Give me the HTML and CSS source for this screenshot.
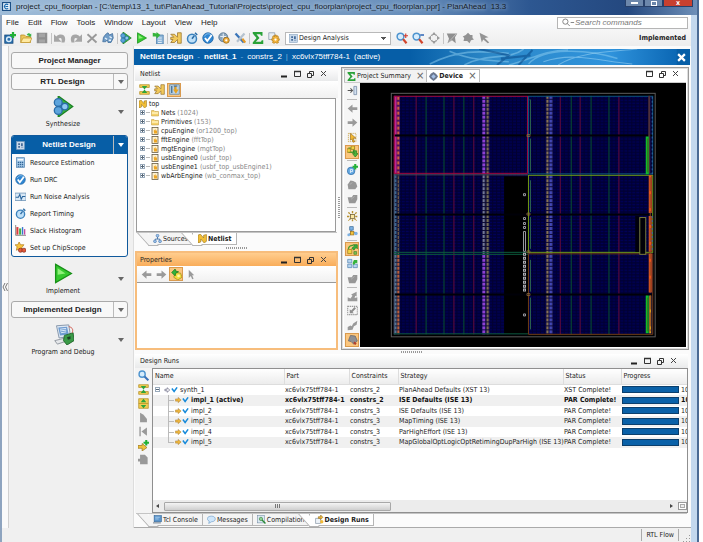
FILE: index.html
```html
<!DOCTYPE html>
<html lang="en">
<head>
<meta charset="utf-8">
<title>project_cpu_floorplan - PlanAhead 13.3</title>
<link rel="stylesheet" href="styles.css">
</head>
<body>
<svg class="sprite" aria-hidden="true">
  <symbol id="logo" viewBox="0 0 16 16"><rect x="1" y="1" width="14" height="14" fill="#eaf3fb" stroke="#1c4f85" stroke-width="2"/><path d="M11 5a4 4 0 1 0 0 6M6 8h5" fill="none" stroke="#1769b0" stroke-width="2"/></symbol>
  <symbol id="newproj" viewBox="0 0 16 16"><rect x="1" y="4" width="11" height="11" fill="#2a6fad" stroke="#174a7d"/><circle cx="6.500" cy="9.500" r="3" fill="none" stroke="#d8ecfb" stroke-width="2"/><path d="M12 0v8M8 4h8" stroke="#22b035" stroke-width="3"/></symbol>
  <symbol id="open" viewBox="0 0 16 16"><path d="M1 14V4h5l2 2h6v8z" fill="#edc75a" stroke="#b58a20"/><path d="M1 14l3-6h12l-3 6z" fill="#ffe9a0" stroke="#c39a33"/><path d="M9 4c1-3 4-3 5-1l1-1v4h-4l1-1" fill="#3cb54a"/></symbol>
  <symbol id="save" viewBox="0 0 16 16"><path d="M1 1h14v14H1z" fill="#8f8f8f"/><path d="M4 2h8v5H4zM4 10h8v4H4z" fill="#a5a5a5"/></symbol>
  <symbol id="undo" viewBox="0 0 16 16"><path d="M0 3v10h10L6 9c3-2 5-1 4 5h4C18 3 8 1 3 6z" fill="#a6a6a6"/></symbol>
  <symbol id="redo" viewBox="0 0 16 16"><path d="M16 3v10H6l4-4C7 7 5 8 6 14H2C-2 3 8 1 13 6z" fill="#a6a6a6"/></symbol>
  <symbol id="cross" viewBox="0 0 16 16"><path d="M2 3l12 11M14 3L2 14" stroke="#999" stroke-width="2.500"/></symbol>
  <symbol id="find" viewBox="0 0 16 16"><path d="M5 3l3-2 2 3 4-2 1 6-3 6H8l-1-4-2 3H1l1-6z" fill="#6f9cc7" stroke="#3d6b99"/><path d="M4 8l3 2M10 6l3 2M9 11h3" stroke="#e6f2fc" stroke-width="2"/></symbol>
  <symbol id="synth" viewBox="0 0 16 16"><path d="M4 0l11 8-11 8z" fill="#38b83c" stroke="#1c8224"/><circle cx="4" cy="5" r="3" fill="#5da4dc" stroke="#2a6da8"/><circle cx="4" cy="11" r="3" fill="#5da4dc" stroke="#2a6da8"/><circle cx="9" cy="8" r="2.500" fill="#8fc8f2" stroke="#2a6da8"/></symbol>
  <symbol id="play" viewBox="0 0 16 16"><path d="M2 1l12 7-12 7z" fill="#35c92f" stroke="#189018"/><path d="M3.500 4l6 4-6 1z" fill="#8ff07a"/></symbol>
  <symbol id="bits" viewBox="0 0 16 16"><path d="M6 4h9v12H6z" fill="#8fb7da" stroke="#4b7dab"/><path d="M8 8h5M8 11h5M8 14h5" stroke="#fff"/><path d="M1 1v5h5v3l5-5-5-4v2z" fill="#35b53a"/></symbol>
  <symbol id="route" viewBox="0 0 16 16"><path d="M1 3h5l4 4V1h5v14h-5V10L6 14H1l3-4H1V7h4z" fill="#f1c95c" stroke="#98722a"/></symbol>
  <symbol id="clock" viewBox="0 0 16 16"><circle cx="8" cy="9" r="6" fill="#bfe0f8" stroke="#3b82bd" stroke-width="2"/><path d="M12 1l3 3M8 9l3-4" stroke="#2c6ca5" stroke-width="2"/></symbol>
  <symbol id="drc" viewBox="0 0 16 16"><circle cx="8" cy="8" r="7" fill="#2f86d2" stroke="#1d62a0"/><path d="M3 6c3-5 7-4 9-2" stroke="#9fd0f5" fill="none"/><path d="M4 8l3 4 6-8" fill="none" stroke="#fff" stroke-width="2.500"/></symbol>
  <symbol id="power" viewBox="0 0 16 16"><circle cx="7" cy="7" r="6" fill="#8aa4bb" stroke="#53718c"/><path d="M3 6h8M7 2v9" stroke="#e6eef5" stroke-width="1.500"/><circle cx="11" cy="11" r="4" fill="#f2ae3a" stroke="#8e641a"/><circle cx="11" cy="11" r="1.500" fill="#fff"/></symbol>
  <symbol id="tools" viewBox="0 0 16 16"><path d="M2 2l11 12" stroke="#3b75b8" stroke-width="3"/><path d="M14 2L4 13" stroke="#b6c3cf" stroke-width="3"/><path d="M11 9l4 5" stroke="#e59a26" stroke-width="3"/></symbol>
  <symbol id="sigma" viewBox="0 0 16 16"><path d="M1 0h13v5h-2l-1-2H6l4 5-5 5h7l1-2h2v5H1v-2l5-6-5-6z" fill="#2aa238"/></symbol>
  <symbol id="gear" viewBox="0 0 16 16"><path d="M1 1h8v9H1z" fill="#e7edf3" stroke="#8b9bac"/><path d="M9 4h2v2l2-1 1 2-1 2h2v2l-2 1 1 2-2 1-2-1-2 1-2-1 1-2-2-1V9h2L6 7l1-2 2 1z" fill="#f4b63d" stroke="#b27916"/><circle cx="10" cy="10" r="1.500" fill="#fff"/></symbol>
  <symbol id="zin" viewBox="0 0 16 16"><circle cx="6" cy="6" r="4.500" fill="#d6ecfc" stroke="#4e94cf" stroke-width="2"/><path d="M9.500 9.500L14 15" stroke="#d2452c" stroke-width="3"/><path d="M13 2v6M10 5h6" stroke="#d43b2c" stroke-width="1.500"/></symbol>
  <symbol id="zout" viewBox="0 0 16 16"><circle cx="6" cy="6" r="4.500" fill="#d6ecfc" stroke="#4e94cf" stroke-width="2"/><path d="M9.500 9.500L14 15" stroke="#d2452c" stroke-width="3"/><path d="M11 4h5" stroke="#2c63b5" stroke-width="2"/></symbol>
  <symbol id="mag" viewBox="0 0 16 16"><circle cx="6" cy="6" r="4.500" fill="#d6ecfc" stroke="#4e94cf" stroke-width="2"/><path d="M9.500 9.500L15 15" stroke="#3c72b8" stroke-width="3"/></symbol>
  <symbol id="fit" viewBox="0 0 16 16"><path d="M8 0l3 4H5zM8 16l3-4H5zM0 8l4-3v6zM16 8l-4-3v6z" fill="#9a9a9a"/><path d="M4 4l2 1M12 4l-2 1M4 12l2-1M12 12l-2-1" stroke="#999" stroke-width="1.500"/></symbol>
  <symbol id="gselect" viewBox="0 0 16 16"><path d="M1 2h14l-3 5 1 8-5-4-6 4 2-6z" fill="#8f8f8f"/><path d="M3 14L14 2" stroke="#c9c9c9"/></symbol>
  <symbol id="gmark" viewBox="0 0 16 16"><path d="M8 1l3 3h3v4l2 2-4 1-2 4-3-3H2l1-4-2-2 4-2z" fill="#929292"/></symbol>
  <symbol id="garrow" viewBox="0 0 16 16"><path d="M2 1l12 6-5 1 6 6-2 1-6-5-2 4z" fill="#949494"/></symbol>
  <symbol id="chip" viewBox="0 0 16 16"><rect x="1" y="1" width="14" height="14" fill="#c9d9ea" stroke="#7f9dbb"/><path d="M4 4h3v3H4zM9 4h3v5H9zM4 9h3v3H4z" fill="#3f6796"/><path d="M9 11h4" stroke="#3f6796"/></symbol>
  <symbol id="calc" viewBox="0 0 16 16"><rect x="2" y="1" width="12" height="14" fill="#a9cdeb" stroke="#4d7ead"/><path d="M4 3h8v2H4z" fill="#fff"/><path d="M5 7v7M8 7v7M11 7v7" stroke="#2f6496" stroke-width="2" stroke-dasharray="2 1"/></symbol>
  <symbol id="noise" viewBox="0 0 16 16"><rect x="0" y="3" width="16" height="11" fill="#d8e8f6" stroke="#5d87ad"/><path d="M1 9h4l2-4 2 7 2-4h4" fill="none" stroke="#2a659c" stroke-width="1.500"/></symbol>
  <symbol id="hist" viewBox="0 0 16 16"><path d="M1 0v15h15" fill="none" stroke="#555"/><path d="M2 3h3v11H2z" fill="#d83d3d"/><path d="M6 5h3v9H6z" fill="#3cae48"/><path d="M10 3h2v11h-2z" fill="#3577cf"/><path d="M13 6h2v8h-2z" fill="#c24b9f"/></symbol>
  <symbol id="scope" viewBox="0 0 16 16"><path d="M6 0l2 4 5 0-3 4 1 4-5-2-4 2 1-5-3-3h4z" fill="#fac53e" stroke="#ad7a17"/><circle cx="8" cy="12" r="3" fill="#e35a3a" stroke="#84291a"/><circle cx="13" cy="12" r="3" fill="#e35a3a" stroke="#84291a"/></symbol>
  <symbol id="board" viewBox="0 0 24 24"><path d="M4 2l14-1 2 13-13 2z" fill="#dfe9f4" stroke="#7d8ea3"/><path d="M6 4l10-1 2 9-10 1z" fill="#6f9cd0"/><path d="M8 6l7-1M8 8l7-1M9 10l6-1" stroke="#e8f2fd"/><path d="M2 19l12-3 3 3-12 4z" fill="#e5e7ea" stroke="#8b929c"/><path d="M13 13l10-3 1 9-8 5-4-5z" fill="#3a9a47" stroke="#1e6428"/><path d="M16 15l4-1v3l-3 1z" fill="#1f4127"/><path d="M18 3c5 1 5 4 4 7" fill="none" stroke="#cf5447"/></symbol>
  <symbol id="compress" viewBox="0 0 16 16"><path d="M1 1h14v4H1zM1 11h14v4H1z" fill="#f2cd51" stroke="#b18a22"/><path d="M8 8L4 3h8zM8 8l-4 5h8z" fill="#2ea43b"/></symbol>
  <symbol id="expand" viewBox="0 0 16 16"><path d="M1 1h14v14H1z" fill="#f2cd51" stroke="#b18a22"/><path d="M1 8h14" stroke="#b18a22"/><path d="M8 1l4 5H4zM8 15l4-5H4z" fill="#2ea43b"/></symbol>
  <symbol id="autofit" viewBox="0 0 16 16"><path d="M1 1h14v14H1z" fill="#bcd2e4" stroke="#5b83a5"/><path d="M4 3v10M7 3h5M9 3v5" stroke="#456f93" stroke-width="2"/><path d="M8 4h3v4h3l-4 6-4-6h2z" fill="#e6a21e"/></symbol>
  <symbol id="netn" viewBox="0 0 16 16"><path d="M0 2l4-2 6 7V2l5-1v12l-4 3-6-7v5l-5 2z" fill="#f1be37" stroke="#8f6a14"/></symbol>
  <symbol id="folder" viewBox="0 0 16 16"><path d="M1 14V3h5l2 2h7v9z" fill="#f5d26d" stroke="#bd9433"/><path d="M2 8h12" stroke="#fff2bd" stroke-width="3"/></symbol>
  <symbol id="inst" viewBox="0 0 16 16"><rect x="2" y="1" width="12" height="14" fill="#fdf1cf" stroke="#5e5138" stroke-width="1.500"/><path d="M5 8l4-4v3h3v6H6V9z" fill="#eda626"/></symbol>
  <symbol id="hier" viewBox="0 0 16 16"><path d="M8 5v4M4 11V9h8v2" fill="none" stroke="#3d6da5" stroke-width="1.500"/><circle cx="8" cy="3" r="2.500" fill="#9cc3ec" stroke="#3d6da5"/><circle cx="3.500" cy="13" r="2.500" fill="#9cc3ec" stroke="#3d6da5"/><circle cx="12.500" cy="13" r="2.500" fill="#9cc3ec" stroke="#3d6da5"/></symbol>
  <symbol id="left" viewBox="0 0 16 16"><path d="M1 8l7-6v4h7v4H8v4z" fill="#9a9a9a"/></symbol>
  <symbol id="right" viewBox="0 0 16 16"><path d="M15 8L8 2v4H1v4h7v4z" fill="#9a9a9a"/></symbol>
  <symbol id="props" viewBox="0 0 16 16"><path d="M6 5l8 1 2 6-6 4-6-4z" fill="#f1dc3c" stroke="#9b8714"/><path d="M1 5l5-5 1 3 4 1-4 2-1 4z" fill="#32b33a" stroke="#15761d"/><circle cx="11" cy="10" r="2" fill="#fff7a8"/></symbol>
  <symbol id="cursor" viewBox="0 0 16 16"><path d="M4 1l8 8H9l2 5-2 1-2-5-3 3z" fill="#9a9a9a"/></symbol>
  <symbol id="ycursor" viewBox="0 0 16 16"><path d="M2 2h11v12H2z" fill="none" stroke="#c59832" stroke-dasharray="2 1"/><path d="M5 2l8 7H9l2 5-2 1-2-5-2 2z" fill="#f3b730" stroke="#9b6e16"/></symbol>
  <symbol id="dock" viewBox="0 0 16 16"><path d="M1 8h7M5 5l3 3-3 3" fill="none" stroke="#555" stroke-width="1.500"/><path d="M10 2h4v12h-4z" fill="#d2e0f0" stroke="#6a7f9c"/></symbol>
  <symbol id="loop" viewBox="0 0 16 16"><path d="M3 3h7v6H3z" fill="none" stroke="#4a9e2e" stroke-width="2"/><path d="M0 4h5v5H0zM6 0h5v5H6z" fill="#f3d344" stroke="#95791b"/><path d="M9 7h5v4l2 0-4 5-4-5h3z" fill="#4db63c" stroke="#287721"/></symbol>
  <symbol id="cells" viewBox="0 0 16 16"><path d="M2 8c0-4 3-6 7-6" fill="none" stroke="#4a9e2e" stroke-width="2"/><path d="M9 1h6v6l-2-2-3 4-3-3 4-3z" fill="#35b33c" stroke="#287721"/><path d="M1 8h6v6H1z" fill="#f3d344" stroke="#95791b"/><path d="M10 11h4v4h-4z" fill="#79c453" stroke="#4a7d2e"/></symbol>
  <symbol id="addp" viewBox="0 0 16 16"><circle cx="6" cy="10" r="5.500" fill="#65a9e2" stroke="#2b69a5"/><path d="M5 13V8h3v3H5" stroke="#fff" fill="none"/><path d="M12 0v8M8 4h8" stroke="#22b035" stroke-width="3"/></symbol>
  <symbol id="blob" viewBox="0 0 16 16"><path d="M1 8l4-6 4 1 4 2 2 6-3 4H2z" fill="#979797"/><path d="M4 8l4-3" stroke="#b8b8b8"/></symbol>
  <symbol id="blob2" viewBox="0 0 16 16"><path d="M1 6h6l2-3h6v6l-3 6H3z" fill="#979797"/><path d="M6 9l5-4" stroke="#bbb"/></symbol>
  <symbol id="burst" viewBox="0 0 16 16"><path d="M8 0v16M0 8h16M2 2l12 12M14 2L2 14" stroke="#b8912f" stroke-width="2" stroke-dasharray="3 1"/><rect x="5" y="5" width="6" height="6" fill="#fbe7a0" stroke="#6b5c3a"/></symbol>
  <symbol id="conn" viewBox="0 0 16 16"><path d="M6 4v6l-4 3M7 10h7" stroke="#5a80a7" fill="none" stroke-width="1.500"/><rect x="4" y="1" width="5" height="5" fill="#7db2e4" stroke="#316392"/><rect x="5" y="8" width="5" height="5" fill="#f3c23c" stroke="#94701a"/><circle cx="2.500" cy="13" r="2" fill="#7db2e4"/><circle cx="13" cy="11" r="2.500" fill="#7db2e4"/></symbol>
  <symbol id="grid" viewBox="0 0 16 16"><path d="M1 2h6v5H1zM1 9h6v5H1zM9 9h6v5H9z" fill="#b8d5ef" stroke="#4d80b0"/><path d="M8 8l2-5h5v5l-2-1-3 3z" fill="#35b33c"/></symbol>
  <symbol id="gout" viewBox="0 0 16 16"><path d="M1 15V9l4 2 3-4-2-2 8-4 0 7-2-1-1 3 4-1v6z" fill="#999"/></symbol>
  <symbol id="gbox" viewBox="0 0 16 16"><path d="M1 2h14v12H1z" fill="none" stroke="#999" stroke-width="1.500" stroke-dasharray="2 1"/><path d="M4 12V6l2 2 5-5 2 2-5 5 2 2z" fill="#8e8e8e"/></symbol>
  <symbol id="gdiag" viewBox="0 0 16 16"><path d="M1 15v-5l4-2 2 1 2-4 6-4-1 6-4 2-2 5z" fill="#999"/></symbol>
  <symbol id="shade" viewBox="0 0 16 16"><path d="M2 10L5 2l7 1 3 7-5 5-4-4z" fill="#8e8f93" stroke="#606168"/><path d="M10 12l3 3" stroke="#b53f2a" stroke-width="3"/></symbol>
  <symbol id="diamond" viewBox="0 0 16 16"><path d="M8 0l3 2 3 3 2 3-3 4-5 4-5-4-3-4 3-5z" fill="#6a7890"/><path d="M8 4l4 4-4 4-4-4z" fill="#a5c0e6"/></symbol>
  <symbol id="gstep" viewBox="0 0 16 16"><path d="M2 1h2v14H2zM13 2v12L5 8z" fill="#999"/></symbol>
  <symbol id="gpage" viewBox="0 0 16 16"><path d="M3 1l5 3 5 6v5H3z" fill="#999"/></symbol>
  <symbol id="addrun" viewBox="0 0 16 16"><path d="M0 8h6V5l7 6-7 5v-4H0z" fill="#f0c33d" stroke="#957019"/><path d="M12 0v8M8 4h8" stroke="#22b035" stroke-width="3"/></symbol>
  <symbol id="gdoc" viewBox="0 0 16 16"><path d="M3 1h7l4 4v10H3v-4H0V7h3z" fill="#999"/></symbol>
  <symbol id="runw" viewBox="0 0 16 16"><path d="M1 6h6V2l7 6-7 6v-4H1z" fill="#fff" stroke="#446" stroke-width="1.500"/></symbol>
  <symbol id="runy" viewBox="0 0 16 16"><path d="M0 5h7V1l8 7-8 7v-4H0z" fill="#edb640" stroke="#94661b"/></symbol>
  <symbol id="tick" viewBox="0 0 16 16"><path d="M1 4l6 8 8-11" fill="none" stroke="#168ada" stroke-width="4"/></symbol>
  <symbol id="console" viewBox="0 0 16 16"><rect x="2" y="1" width="13" height="11" fill="#5a95cc" stroke="#2c5f90"/><path d="M4 4h8M4 7h6" stroke="#d9edff"/><path d="M0 14h14" stroke="#7f8b97" stroke-width="2"/></symbol>
  <symbol id="bubble" viewBox="0 0 16 16"><path d="M8 2c9 0 9 10 0 10l-5 3 1-4C-2 8 0 2 8 2z" fill="#cfe6fa" stroke="#5d93c4"/></symbol>
  <symbol id="compile" viewBox="0 0 16 16"><rect x="1" y="1" width="12" height="13" fill="#dce8f2" stroke="#708aa3"/><circle cx="7" cy="7" r="3" fill="#8ed093" stroke="#2b7a33"/><path d="M9 9l6 6" stroke="#2a8a35" stroke-width="2.500"/></symbol>
  <symbol id="runs" viewBox="0 0 16 16"><path d="M1 6h9v9H1z" fill="#eef3f8" stroke="#6c7f93"/><path d="M6 3h4V0l4 4-4 4V6H6z" fill="#f1ba37" stroke="#8d681b"/><circle cx="12" cy="12" r="3" fill="#f1ba37"/></symbol>
  <symbol id="winctl" viewBox="0 0 50 10"><path d="M1 7.500h6" stroke="#222" stroke-width="2"/><path d="M14.500 2.500h6v5h-6z" fill="none" stroke="#333"/><path d="M14 2.500h7" stroke="#333" stroke-width="1.500"/><path d="M27.500 4.500h4v4h-4zM29.500 4V2.500h4v4H32" fill="none" stroke="#333"/><path d="M41 2l5 5M46 2l-5 5" stroke="#444"/></symbol>
</svg>

<div class="desktop">
<div class="window">
  <header class="titlebar">
    <svg class="ic"><use href="#logo"/></svg>
    <h1>project_cpu_floorplan - [C:\temp\13_1_tut\PlanAhead_Tutorial\Projects\project_cpu_floorplan\project_cpu_floorplan.ppr] - PlanAhead&nbsp; 13.3</h1>
    <div class="caption">
      <button type="button" class="cap" aria-label="Minimize"><i class="c-min"></i></button>
      <button type="button" class="cap" aria-label="Restore"><i class="c-max"></i></button>
      <button type="button" class="cap cap-close" aria-label="Close">x</button>
    </div>
  </header>

  <div class="client">
    <div class="menurow">
      <nav class="menu"><a href="#">File</a><a href="#">Edit</a><a href="#">Flow</a><a href="#">Tools</a><a href="#">Window</a><a href="#">Layout</a><a href="#">View</a><a href="#">Help</a></nav>
      <label class="search">
        <svg viewBox="0 0 16 10"><circle cx="5" cy="4" r="3" fill="none" stroke="#777"/><path d="M7 6l3 3M11 5h4" stroke="#777"/></svg>
        <input type="search" placeholder="Search commands" aria-label="Search commands">
      </label>
    </div>

    <div class="toolbar">
      <button type="button" aria-label="New project"><svg><use href="#newproj"/></svg></button>
      <button type="button" aria-label="Open"><svg><use href="#open"/></svg></button>
      <button type="button" aria-label="Save"><svg><use href="#save"/></svg></button>
      <span class="vsep"></span>
      <button type="button" aria-label="Undo"><svg><use href="#undo"/></svg></button>
      <button type="button" aria-label="Redo"><svg><use href="#redo"/></svg></button>
      <button type="button" aria-label="Delete"><svg><use href="#cross"/></svg></button>
      <button type="button" aria-label="Find"><svg><use href="#find"/></svg></button>
      <span class="vsep"></span>
      <button type="button" aria-label="Synthesize"><svg><use href="#synth"/></svg></button>
      <button type="button" aria-label="Implement"><svg><use href="#play"/></svg></button>
      <button type="button" aria-label="Generate bitstream"><svg><use href="#bits"/></svg></button>
      <span class="vsep"></span>
      <button type="button" aria-label="Schematic"><svg><use href="#route"/></svg></button>
      <button type="button" aria-label="Timing"><svg><use href="#clock"/></svg></button>
      <button type="button" aria-label="DRC"><svg><use href="#drc"/></svg></button>
      <button type="button" aria-label="Noise"><svg><use href="#power"/></svg></button>
      <button type="button" aria-label="Tools"><svg><use href="#tools"/></svg></button>
      <span class="vsep"></span>
      <button type="button" aria-label="Project summary"><svg><use href="#sigma"/></svg></button>
      <button type="button" aria-label="Settings"><svg><use href="#gear"/></svg></button>
      <div class="layoutpick">
        <svg class="ic"><use href="#chip"/></svg>
        <select aria-label="Layout"><option>Design Analysis</option></select>
      </div>
      <button type="button" aria-label="Zoom in"><svg><use href="#zin"/></svg></button>
      <button type="button" aria-label="Zoom out"><svg><use href="#zout"/></svg></button>
      <button type="button" aria-label="Zoom fit"><svg><use href="#fit"/></svg></button>
      <span class="vsep"></span>
      <button type="button" aria-label="Select area"><svg><use href="#gselect"/></svg></button>
      <button type="button" aria-label="Mark"><svg><use href="#gmark"/></svg></button>
      <button type="button" aria-label="Unselect"><svg><use href="#garrow"/></svg></button>
      <strong class="state">Implemented</strong>
    </div>

    <div class="body">
      <button type="button" class="collapse" aria-label="Collapse navigator"><svg viewBox="0 0 6 8"><path d="M3 0L1 4l2 4M5.500 0l-2 4 2 4" fill="none" stroke="#777"/></svg></button>
      <aside class="flow">
        <button type="button" class="stage">Project Manager</button>
        <div class="stage split"><button type="button">RTL Design</button><button type="button" class="drop" aria-label="RTL Design menu"></button></div>
        <div class="step">
          <button type="button" class="go"><svg><use href="#synth"/></svg>Synthesize</button>
          <button type="button" class="drop" aria-label="Synthesize menu"></button>
        </div>
        <section class="current">
          <div class="stage split active"><svg class="ic"><use href="#chip"/></svg><button type="button">Netlist Design</button><button type="button" class="drop" aria-label="Netlist Design menu"></button></div>
          <ul>
            <li><svg class="ic"><use href="#calc"/></svg><a href="#">Resource Estimation</a></li>
            <li><svg class="ic"><use href="#drc"/></svg><a href="#">Run DRC</a></li>
            <li><svg class="ic"><use href="#noise"/></svg><a href="#">Run Noise Analysis</a></li>
            <li><svg class="ic"><use href="#clock"/></svg><a href="#">Report Timing</a></li>
            <li><svg class="ic"><use href="#hist"/></svg><a href="#">Slack Histogram</a></li>
            <li><svg class="ic"><use href="#scope"/></svg><a href="#">Set up ChipScope</a></li>
          </ul>
        </section>
        <div class="step">
          <button type="button" class="go"><svg><use href="#play"/></svg>Implement</button>
          <button type="button" class="drop" aria-label="Implement menu"></button>
        </div>
        <div class="stage split"><button type="button">Implemented Design</button><button type="button" class="drop" aria-label="Implemented Design menu"></button></div>
        <div class="step">
          <button type="button" class="go"><svg><use href="#board"/></svg>Program and Debug</button>
          <button type="button" class="drop" aria-label="Program and Debug menu"></button>
        </div>
      </aside>

      <main class="work">
        <div class="banner">
          <h2><b>Netlist Design</b><i>-</i><b>netlist_1</b><i>-</i><span>constrs_2</span><i>|</i><span>xc6vlx75tff784-1</span><span>(active)</span></h2>
          <svg class="swirl" viewBox="0 0 270 15" preserveAspectRatio="none" aria-hidden="true">
            <defs><linearGradient id="sky"><stop offset="0" stop-color="#065ea7"/><stop offset=".3" stop-color="#2c88c8"/><stop offset=".75" stop-color="#2f93dc"/><stop offset="1" stop-color="#0b67b4"/></linearGradient></defs>
            <rect width="270" height="15" fill="url(#sky)"/>
            <path d="M20 14c30-14 50-12 80-10M40 2c20 8 40 9 60 10M55 15c25-12 45-4 60-15M100 15c20-4 35-14 60-14M120 14c15-16 60-14 90-5" fill="none" stroke="#8fd0f2" stroke-width="1.500" opacity=".5"/>
            <path d="M70 0l30 6-12 9M110 15l14-14M92 9l30-3" fill="none" stroke="#0a4d8c" stroke-width="2" opacity=".6"/>
            <path d="M150 15c20-12 50-12 80-15M135 12c30-10 60 0 90 2" fill="none" stroke="#a8dcf8" opacity=".5"/>
          </svg>
          <button type="button" class="x" aria-label="Close design"><svg viewBox="0 0 8 8"><path d="M1 1l6 6M7 1L1 7" stroke="#fff" stroke-width="2"/></svg></button>
        </div>

        <div class="upper">
          <div class="stack">
            <section class="panel netlist">
              <div class="ptitle"><h3>Netlist</h3><svg class="winctl"><use href="#winctl"/></svg></div>
              <div class="ptools">
                <button type="button" aria-label="Collapse all"><svg><use href="#compress"/></svg></button>
                <button type="button" aria-label="Schematic"><svg><use href="#route"/></svg></button>
                <button type="button" class="on" aria-label="Auto fit"><svg><use href="#autofit"/></svg></button>
              </div>
              <ul class="tree">
                <li class="root"><svg class="ic"><use href="#netn"/></svg>top</li>
                <li><svg class="ic"><use href="#folder"/></svg><span>Nets <em>(1024)</em></span></li>
                <li><svg class="ic"><use href="#folder"/></svg><span>Primitives <em>(153)</em></span></li>
                <li><svg class="ic"><use href="#inst"/></svg><span>cpuEngine <em>(or1200_top)</em></span></li>
                <li><svg class="ic"><use href="#inst"/></svg><span>fftEngine <em>(fftTop)</em></span></li>
                <li><svg class="ic"><use href="#inst"/></svg><span>mgtEngine <em>(mgtTop)</em></span></li>
                <li><svg class="ic"><use href="#inst"/></svg><span>usbEngine0 <em>(usbf_top)</em></span></li>
                <li><svg class="ic"><use href="#inst"/></svg><span>usbEngine1 <em>(usbf_top_usbEngine1)</em></span></li>
                <li><svg class="ic"><use href="#inst"/></svg><span>wbArbEngine <em>(wb_conmax_top)</em></span></li>
              </ul>
              <div class="tabs">
                <button type="button" class="lead"><svg class="ic"><use href="#hier"/></svg>Sources</button>
                <button type="button" class="sel"><svg class="ic"><use href="#netn"/></svg>Netlist</button>
              </div>
            </section>
            <div class="grip"></div>
            <section class="panel props">
              <div class="ptitle"><h3>Properties</h3><svg class="winctl"><use href="#winctl"/></svg></div>
              <div class="ptools">
                <button type="button" aria-label="Back"><svg><use href="#left"/></svg></button>
                <button type="button" aria-label="Forward"><svg><use href="#right"/></svg></button>
                <button type="button" class="on" aria-label="Auto update"><svg><use href="#props"/></svg></button>
                <button type="button" aria-label="Select"><svg><use href="#cursor"/></svg></button>
              </div>
              <div class="blank"></div>
            </section>
          </div>
          <div class="vgrip"></div>
          <section class="device">
            <div class="toptabs">
              <button type="button"><svg class="ic"><use href="#sigma"/></svg>Project Summary<span class="tx">×</span></button>
              <button type="button" class="sel"><svg class="ic"><use href="#diamond"/></svg>Device<span class="tx">×</span></button>
              <svg class="devctl" viewBox="13 0 37 10"><use href="#winctl" width="50" height="10"/></svg>
            </div>
            <div class="devbody">
              <div class="side">
                <button type="button" aria-label="Dock"><svg><use href="#dock"/></svg></button>
                <span class="hsep"></span>
                <button type="button" aria-label="Previous"><svg><use href="#left"/></svg></button>
                <button type="button" aria-label="Next"><svg><use href="#right"/></svg></button>
                <button type="button" aria-label="Select area"><svg><use href="#ycursor"/></svg></button>
                <button type="button" class="on" aria-label="Routing"><svg><use href="#loop"/></svg></button>
                <span class="hsep"></span>
                <button type="button" aria-label="Add pblock"><svg><use href="#addp"/></svg></button>
                <button type="button" aria-label="Set pblock"><svg><use href="#blob"/></svg></button>
                <button type="button" aria-label="Resize pblock"><svg><use href="#blob2"/></svg></button>
                <span class="hsep"></span>
                <button type="button" aria-label="Highlight"><svg><use href="#burst"/></svg></button>
                <button type="button" aria-label="Connectivity"><svg><use href="#conn"/></svg></button>
                <span class="hsep"></span>
                <button type="button" class="on" aria-label="Dynamic cells"><svg><use href="#cells"/></svg></button>
                <button type="button" aria-label="Site grid"><svg><use href="#grid"/></svg></button>
                <button type="button" aria-label="Shape"><svg><use href="#blob2"/></svg></button>
                <span class="hsep"></span>
                <button type="button" aria-label="Export"><svg><use href="#gout"/></svg></button>
                <button type="button" aria-label="Fit box"><svg><use href="#gbox"/></svg></button>
                <button type="button" aria-label="Swap"><svg><use href="#gdiag"/></svg></button>
                <button type="button" class="on" aria-label="Shading"><svg><use href="#shade"/></svg></button>
              </div>
              <svg class="die" viewBox="359 83 328 264" role="img" aria-label="Device floorplan">
                <defs>
                  <pattern id="clb" width="4" height="3" patternUnits="userSpaceOnUse"><rect width="4" height="3" fill="#00003a"/><path d="M0 .5h4" stroke="#000058"/><path d="M.5 0v3" stroke="#020030"/></pattern>
                  <pattern id="hot" width="6" height="5" patternUnits="userSpaceOnUse"><rect width="6" height="5" fill="#501060"/><path d="M1.500 0v5" stroke="#c82a9c" stroke-width="2"/><path d="M4.500 1v3" stroke="#e0683a" stroke-width="2"/></pattern>
                  <pattern id="cool" width="6" height="4" patternUnits="userSpaceOnUse"><rect width="6" height="4" fill="#161a3c"/><path d="M1.500 0v3" stroke="#3f6f9c" stroke-width="2"/><path d="M4.500 1v3" stroke="#8a6a48"/></pattern>
                  <pattern id="warm" width="6" height="4" patternUnits="userSpaceOnUse"><rect width="6" height="4" fill="#161a3c"/><path d="M1.500 0v3" stroke="#5a80a0" stroke-width="2"/><path d="M4.500 0v3" stroke="#d0683a" stroke-width="2"/></pattern>
                  <pattern id="vio" width="7" height="4" patternUnits="userSpaceOnUse"><rect width="7" height="4" fill="#0c0838"/><path d="M1.500 0v3" stroke="#8a3fd6" stroke-width="3"/><path d="M5.500 0v3" stroke="#8a7856" stroke-width="2"/></pattern>
                  <pattern id="mid" width="7" height="4" patternUnits="userSpaceOnUse"><rect width="7" height="4" fill="#0c0a30"/><path d="M1.500 0v3" stroke="#7f86a8" stroke-width="2"/><path d="M5.500 0v3" stroke="#827a58" stroke-width="2"/></pattern>
                  <pattern id="blu" width="7" height="4" patternUnits="userSpaceOnUse"><rect width="7" height="4" fill="#0c0838"/><path d="M1.500 0v3" stroke="#8f7a58" stroke-width="2"/><path d="M5 0v3" stroke="#4348b4" stroke-width="3"/></pattern>
                </defs>
                <rect x="390.500" y="92.500" width="265.500" height="245" fill="none" stroke="#5c5c5c"/>
                <rect x="393" y="95" width="261" height="240" fill="url(#clb)"/>
                <path d="M415.500 95v240M453.500 95v240M473.500 95v240M560.500 95v240M580.500 95v240M619.500 95v240" stroke="#680a3c"/>
                <path d="M425.500 95v240M443.500 95v240M463.500 95v240M571.500 95v240M591.500 95v240M609.500 95v240" stroke="#06522e"/>
                <rect x="504" y="176" width="24" height="159" fill="#000"/>
                <g transform="translate(393 95)"><rect width="6" height="79" fill="url(#hot)"/><rect y="79" width="6" height="81" fill="url(#cool)"/><rect y="160" width="6" height="80" fill="url(#warm)"/></g>
                <g transform="translate(482 95)"><rect width="7" height="79" fill="url(#vio)"/><rect y="79" width="7" height="81" fill="url(#mid)"/><rect y="160" width="7" height="80" fill="url(#vio)"/></g>
                <g transform="translate(546 95)"><rect width="7" height="240" fill="url(#blu)"/></g>
                <path d="M393 135h261M393 214.500h261M393 295h261" stroke="#000008" stroke-width="2"/>
                <path d="M393.500 174v161" stroke="#4a5a72"/>
                <rect x="393.500" y="95.500" width="134" height="77.500" fill="none" stroke="#a3083f"/>
                <path d="M393 174.500h135" stroke="#4c4c56"/>
                <rect x="528.500" y="95.500" width="125" height="78" fill="none" stroke="#0c5478"/>
                <path d="M393 254.500h135M393 334.500h135M393 252.500h135" stroke="#0c5a3c"/>
                <path d="M528.500 254v81h125v-81z" fill="none" stroke="#703c14"/>
                <rect x="528.500" y="175" width="125" height="77.500" fill="none" stroke="#6f9a12"/>
                <path d="M529.500 99h1v35M530.500 138v33M530.500 180v32M530.500 217v32M530.500 260v32M530.500 298v32" fill="none" stroke="#2a6450"/>
                <path d="M527 134h3v2h-3zM527 213h3v2h-3zM527 251h3v2h-3zM527 294h3v2h-3z" fill="none" stroke="#8d6a42" stroke-width=".8"/>
                <path d="M523.500 193.500h2v2h-2zM523.500 217.500h2v2h-2zM523.500 222.500h2v2h-2zM523.500 226.500h2v2h-2zM523.500 231.500h2v20h-2zM523.500 314.500h2v2h-2z" fill="none" stroke="#9a9aa2"/>
                <path d="M524.500 253v40" stroke="#b0b0b8" stroke-width="3" stroke-dasharray="3 1"/><path d="M524.500 254v38" stroke="#111" stroke-width="1" stroke-dasharray="1 3"/>
                <rect x="636" y="216" width="4" height="36" fill="#00000c"/>
                <rect x="640.500" y="217.500" width="6" height="37" fill="#020208" stroke="#7a7c3c"/>
                <path d="M650 95v78" stroke="#4e3038" stroke-width="2"/>
                <path d="M648 136v38M648 296v38" stroke="#0fbf2a" stroke-width="3"/><path d="M648.500 138v34M648.500 298v34" stroke="#46681a"/>
                <path d="M651 175v38M651 216v36M651 254v39" stroke="#e8561a" stroke-width="3"/><path d="M651 296v38" stroke="#d8981a" stroke-width="2"/>
                <path d="M651 177v155" stroke="#8a4a26" stroke-dasharray="14 3"/>
                <path d="M653 96v78M653 216v36" stroke="#3268a8" stroke-dasharray="2 2"/>
              </svg>
            </div>
          </section>
        </div>
        <div class="grip wide"></div>

        <section class="panel runs">
          <div class="ptitle"><h3>Design Runs</h3><svg class="winctl"><use href="#winctl"/></svg></div>
          <div class="runbody">
            <div class="runtools">
              <button type="button" aria-label="Search"><svg><use href="#mag"/></svg></button>
              <button type="button" aria-label="Collapse all"><svg><use href="#compress"/></svg></button>
              <button type="button" aria-label="Expand all"><svg><use href="#expand"/></svg></button>
              <button type="button" aria-label="Launch"><svg><use href="#gpage"/></svg></button>
              <button type="button" aria-label="Reset"><svg><use href="#gstep"/></svg></button>
              <button type="button" aria-label="Create runs"><svg><use href="#addrun"/></svg></button>
              <button type="button" aria-label="Open run"><svg><use href="#gdoc"/></svg></button>
            </div>
            <div class="runview">
              <table>
                <colgroup><col class="k1"><col class="k2"><col class="k3"><col class="k4"><col class="k5"><col class="k6"></colgroup>
                <thead><tr><th>Name</th><th>Part</th><th>Constraints</th><th>Strategy</th><th>Status</th><th>Progress</th></tr></thead>
                <tbody>
                  <tr class="parent"><td><span class="minus"></span><svg><use href="#runw"/></svg><svg><use href="#tick"/></svg>synth_1</td><td>xc6vlx75tff784-1</td><td>constrs_2</td><td>PlanAhead Defaults (XST 13)</td><td>XST Complete!</td><td><span class="bar"></span>100%</td></tr>
                  <tr class="act"><td><svg><use href="#runy"/></svg><svg><use href="#tick"/></svg>impl_1 (active)</td><td>xc6vlx75tff784-1</td><td>constrs_2</td><td>ISE Defaults (ISE 13)</td><td>PAR Complete!</td><td><span class="bar"></span>100%</td></tr>
                  <tr><td><svg><use href="#runy"/></svg><svg><use href="#tick"/></svg>impl_2</td><td>xc6vlx75tff784-1</td><td>constrs_3</td><td>ISE Defaults (ISE 13)</td><td>PAR Complete!</td><td><span class="bar"></span>100%</td></tr>
                  <tr><td><svg><use href="#runy"/></svg><svg><use href="#tick"/></svg>impl_3</td><td>xc6vlx75tff784-1</td><td>constrs_3</td><td>MapTiming (ISE 13)</td><td>PAR Complete!</td><td><span class="bar"></span>100%</td></tr>
                  <tr><td><svg><use href="#runy"/></svg><svg><use href="#tick"/></svg>impl_4</td><td>xc6vlx75tff784-1</td><td>constrs_3</td><td>ParHighEffort (ISE 13)</td><td>PAR Complete!</td><td><span class="bar"></span>100%</td></tr>
                  <tr class="last"><td><svg><use href="#runy"/></svg><svg><use href="#tick"/></svg>impl_5</td><td>xc6vlx75tff784-1</td><td>constrs_3</td><td>MapGlobalOptLogicOptRetimingDupParHigh (ISE 13)</td><td>PAR Complete!</td><td><span class="bar"></span>100%</td></tr>
                </tbody>
              </table>
              <div class="hscroll"><span class="tri l"></span><span class="thumb"></span><span class="rest"></span><span class="tri r"></span><span class="corner"></span></div>
            </div>
          </div>
          <div class="tabs">
            <button type="button" class="lead"><svg class="ic"><use href="#console"/></svg>Tcl Console</button>
            <button type="button"><svg class="ic"><use href="#bubble"/></svg>Messages</button>
            <button type="button"><svg class="ic"><use href="#compile"/></svg>Compilation</button>
            <button type="button" class="sel"><svg class="ic"><use href="#runs"/></svg>Design Runs</button>
          </div>
        </section>
      </main>
    </div>
    <footer class="status"><span>RTL Flow</span><i class="resize"></i></footer>
  </div>
</div>
</div>
</body>
</html>
```
FILE: styles.css
```css
* { box-sizing: border-box; }
body { margin: 0; background: #fff; color: #222; font: 7px/10px "DejaVu Sans Condensed", "DejaVu Sans", sans-serif; }
h1, h2, h3, ul { margin: 0; padding: 0; font-size: inherit; font-weight: normal; list-style: none; }
button, input, select { font: inherit; color: inherit; background: none; border: 0; padding: 0; margin: 0; }
a { color: inherit; text-decoration: none; }
em, i { font-style: normal; }
svg { display: block; flex: none; }
.sprite { position: absolute; width: 0; height: 0; }
.ic { width: 9px; height: 9px; }

.desktop { padding-right: 4px; height: 100vh; min-height: 480px; }
.window { display: flex; flex-direction: column; height: 100%; padding: 0 6px 0 2px; background: linear-gradient(90deg, #8ea4bf, #c3d8ee 99%, #c3d8ee); border-right: 2px solid #4a6a94; }

.titlebar { display: flex; flex: none; align-items: center; gap: 5px; height: 15px; margin: 0 -6px 0 -2px; padding: 0 4px 2px 2px; background: linear-gradient(90deg, #9dbbd8, #86a6c9 35%, #668dba 60%, #2d5791 76%, #24487f 90%, #6e8fb8); }
.titlebar h1 { flex: 1; font: 8px/12px "Liberation Sans", Arial, sans-serif; color: #141c28; white-space: nowrap; overflow: hidden; text-shadow: 0 0 4px #dbe7f3; }
.caption { display: flex; align-self: flex-start; gap: 0; height: 7px; }
.cap { display: flex; width: 19px; height: 7px; align-items: center; justify-content: center; border: 1px solid #27406a; border-top: 0; background: #6c87ab; }
.cap-close { width: 30px; background: #c8402f; color: #fff; font-weight: bold; line-height: 6px; }
.c-min { width: 7px; height: 2px; background: #fff; }
.c-max { width: 6px; height: 5px; border: 1px solid #fff; }

.client { display: flex; flex: 1; flex-direction: column; min-height: 0; background: #f0f0f0; }
.menurow { display: flex; flex: none; align-items: center; justify-content: space-between; height: 15px; background: linear-gradient(#fff, #f4f5f7); padding: 0 3px 0 4px; }
.menu { display: flex; gap: 9px; font: 8px/12px "Liberation Sans", Arial, sans-serif; }
.search { display: flex; align-items: center; width: 131px; height: 12px; padding: 0 3px; gap: 0; background: #fff; border: 1px solid #b5b5b5; }
.search svg { width: 14px; height: 9px; }
.search input { flex: 1; min-width: 0; font: italic 8px/10px "Liberation Sans", Arial, sans-serif; outline: 0; }
.search input::placeholder { color: #777; opacity: 1; }

.toolbar { display: flex; flex: none; align-items: center; gap: 4px; height: 16px; padding: 0 5px 0 2px; background: linear-gradient(#f6f6f6, #ededed); }
.toolbar button, .toolbar button svg { width: 12px; height: 12px; }
.vsep { width: 1px; height: 11px; margin: 0 -2px 0 -1px; background: #c4c4c4; }
.layoutpick { display: flex; align-items: center; gap: 1px; width: 106px; height: 13px; padding: 0 3px; margin: 0 1px; background: #fff; border: 1px solid #b9b9b9; }
.layoutpick select { flex: 1; appearance: none; height: 10px; background: linear-gradient(#555, #555) no-repeat right 1px top 4px / 5px 1px, linear-gradient(#555, #555) no-repeat right 2px top 5px / 3px 1px, linear-gradient(#555, #555) no-repeat right 3px top 6px / 1px 1px; }
.state { margin-left: auto; }

.body { display: flex; flex: 1; min-height: 0; }
.collapse { display: flex; width: 7px; align-items: center; justify-content: center; background: #fafafa; border-right: 1px solid #d0d0d0; }
.collapse svg { width: 6px; height: 8px; }
.flow { display: flex; flex: none; flex-direction: column; width: 125px; padding: 6px 5px 0 2px; background: #f0f0f0; border-right: 1px solid #ddd; }
.stage { display: flex; flex: none; align-items: center; justify-content: center; height: 17px; width: 100%; font: bold 8px/10px "Liberation Sans", Arial, sans-serif; background: #f8f8f8; border: 1px solid #aaa; border-radius: 3px; }
.split > button:first-of-type { flex: 1; font: inherit; }
.flow > .stage + .stage { margin-top: 4px; }
.drop { display: flex; align-self: stretch; width: 14px; align-items: center; justify-content: center; }
.drop::before { content: ""; border: 3px solid transparent; border-top: 4px solid #666; border-bottom: 0; }
.split .drop { border-left: 1px solid #bbb; }
.step { display: flex; flex: none; align-items: center; height: 44px; }
.go { display: flex; flex: 1; flex-direction: column; align-items: center; gap: 2px; padding-left: 1px; }
.go svg { width: 21px; height: 21px; }
.current { flex: none; margin-top: 1px; background: #fcfcfc; border: 1px solid #10599c; border-radius: 3px; }
.active { height: 18px; color: #fff; background: #075ea6; border: 0; border-radius: 2px 2px 0 0; padding-left: 4px; }
.active .drop::before { border-top-color: #fff; }
.current li { display: flex; align-items: center; gap: 4px; height: 17px; padding-left: 3px; }
.current li .ic { width: 11px; height: 11px; }

.work { display: flex; flex: 1; flex-direction: column; min-width: 0; padding: 3px 1px 1px 0; background: #fbfbfb; border-bottom: 1px solid #aaa; }
.banner { display: flex; flex: none; align-items: center; height: 16px; padding: 0 4px 0 6px; background: #065ea7; color: #fff; }
.banner h2 { display: flex; gap: 4px; font: 8px/12px "Liberation Sans", Arial, sans-serif; white-space: nowrap; }
.banner i { color: #7fb4dd; }
.swirl { flex: 1 1 0; min-width: 0; height: 16px; margin-left: 30px; }
.x svg { width: 9px; height: 9px; }

.upper { display: flex; flex: 285 1 0; min-height: 0; padding: 2px 1px 0 1px; }
.stack { display: flex; flex: none; flex-direction: column; width: 203px; }
.panel { display: flex; flex-direction: column; min-height: 0; }
.netlist { flex: 184 1 0; }
.ptitle { display: flex; flex: none; align-items: center; justify-content: space-between; height: 14px; padding: 0 8px 0 5px; background: linear-gradient(#fff, #e9eaeb); }
.winctl { width: 50px; height: 10px; }
.ptools { display: flex; flex: none; align-items: center; gap: 1px; height: 17px; padding-left: 2px; background: linear-gradient(#fff, #f1f1f1); }
.ptools button { display: flex; width: 14px; height: 14px; align-items: center; justify-content: center; border: 1px solid transparent; }
.ptools svg { width: 11px; height: 11px; }
.ptools .on, .side .on { background: #fbc67e; border-color: #d99a4e; }
.tree { flex: 1; margin: 0 2px 0 1px; padding: 0 0 0 2px; background: #fff; border: 1px solid #9a9a9a; overflow: hidden; }
.tree li { display: flex; align-items: center; gap: 2px; height: 9px; white-space: nowrap; }
.tree li:not(.root)::before { content: ""; width: 13px; height: 5px; margin-left: 1px; margin-right: -4px; background: linear-gradient(#567, #567) 1px 2px / 3px 1px no-repeat, linear-gradient(#567, #567) 2px 1px / 1px 3px no-repeat, linear-gradient(#9ab, #9ab) 0 0 / 5px 1px no-repeat, linear-gradient(#9ab, #9ab) 0 4px / 5px 1px no-repeat, linear-gradient(#9ab, #9ab) 0 0 / 1px 5px no-repeat, linear-gradient(#9ab, #9ab) 4px 0 / 1px 5px no-repeat, linear-gradient(#bbb, #bbb) 6px 2px / 4px 1px no-repeat; }
.tree .ic { width: 8px; height: 8px; }
.tree em { color: #888; }

.tabs { display: flex; flex: none; height: 13px; padding-left: 13px; margin: 0 1px; border-top: 1px solid #c4c4c4; }
.tabs button { position: relative; display: flex; align-items: center; gap: 1px; height: 12px; padding: 0 4px; background: #f4f4f4; border-right: 1px solid #b5b5b5; border-bottom: 1px solid #b5b5b5; }
.tabs .lead::before, .tabs .sel::before { content: ""; position: absolute; left: -6px; top: 0; width: 9px; height: 12px; border-left: 1px solid #aaa; border-bottom: 1px solid #b5b5b5; background: inherit; transform: skewX(42deg); }
.tabs .ic { position: relative; }
.tabs .sel { background: #fff; font-weight: bold; padding-left: 5px; }

.grip { flex: none; width: 22px; height: 2px; margin: 2px auto; background: repeating-linear-gradient(90deg, #999 0 1px, transparent 1px 2px); }
.grip.wide { margin: 1px auto; }
.vgrip { flex: none; align-self: flex-start; width: 2px; height: 22px; margin: 130px 1px 0 0; background: repeating-linear-gradient(#999 0 1px, transparent 1px 2px); }
.props { flex: 98 1 0; border: 2px solid #f7bd7c; }
.props .ptitle { height: 13px; padding: 0 6px 0 3px; background: linear-gradient(#ffcd8e, #f9ad5a); }
.props .ptools { height: 16px; }
.blank { flex: 1; background: #fff; border-top: 1px solid #9a9a9a; }

.device { display: flex; flex: 1; flex-direction: column; min-width: 0; padding: 0 2px 2px; background: #fff; border: 1px solid #9a9a9a; box-shadow: inset 0 0 0 1px #dedede; }
.toptabs { display: flex; flex: none; align-items: flex-end; height: 15px; border-bottom: 1px solid #ccc; }
.toptabs button { display: flex; align-items: center; gap: 1px; height: 13px; padding: 0 2px; background: #f2f2f2; border: 1px solid #bbb; border-bottom: 0; }
.toptabs .sel { margin-left: -1px; background: #fff; font-weight: bold; }
.tx { margin-left: 4px; font: 10px/10px "DejaVu Sans", sans-serif; color: #666; }
.devctl { width: 37px; height: 10px; margin: 0 4px 3px auto; }
.devbody { display: flex; flex: 1; min-height: 0; }
.side { display: flex; flex: none; flex-direction: column; justify-content: space-between; width: 16px; padding: 0 1px; background: #f6f6f6; }
.side button { display: flex; width: 14px; height: 14px; align-items: center; justify-content: center; border: 1px solid transparent; }
.side svg { width: 11px; height: 11px; }
.hsep { width: 10px; height: 1px; margin: 1px 2px; background: #bbb; }
.die { flex: 1; min-width: 0; height: 100%; background: #000; }

.runs { flex: 173 1 0; margin: 0 2px 0 1px; }
.runbody { display: flex; flex: 1; min-height: 0; }
.runtools { flex: none; width: 17px; padding: 0 3px; background: #f4f4f4; }
.runtools button { display: flex; width: 12px; height: 14px; align-items: center; }
.runtools svg { width: 11px; height: 11px; }
.runview { display: flex; flex: 1; flex-direction: column; min-width: 0; background: #fff; border: 1px solid #8f8f8f; overflow: hidden; }
table { flex: none; width: 560px; table-layout: fixed; border-collapse: collapse; white-space: nowrap; }
.k1 { width: 131px; } .k2 { width: 65px; } .k3 { width: 49px; } .k4 { width: 165px; } .k5 { width: 58px; } .k6 { width: 92px; }
th { height: 15px; padding: 0 2px; text-align: left; font-weight: normal; background: linear-gradient(#fff, #ececec); border-right: 1px solid #ddd; border-bottom: 1px solid #ddd; }
td { height: 10px; padding: 0 1px; line-height: 10px; }
tbody tr:nth-child(even) { background: #f0f0f0; }
tbody tr:nth-child(even) td { height: 11px; }
td svg, .minus, .bar { display: inline-block; vertical-align: middle; }
td svg { width: 7px; height: 6px; }
td:first-child { padding-left: 22px; background: linear-gradient(#bbb, #bbb) 15px 0 / 1px 100% no-repeat, linear-gradient(#bbb, #bbb) 15px 5px / 6px 1px no-repeat; }
.last td:first-child { background-size: 1px 5px, 6px 1px; }
.parent td:first-child { padding-left: 2px; background: none; }
.act { font-weight: bold; color: #111; }
.minus { width: 5px; height: 5px; margin-right: 4px; border: 1px solid #9ab; background: linear-gradient(#567, #567) 0 1px / 3px 1px no-repeat; }
.bar { width: 57px; height: 7px; margin: 0 2px 0 0; background: #0a61a8; border: 1px solid #0b3f6c; }
td svg + svg { margin-right: 2px; }

.hscroll { display: flex; align-items: center; height: 12px; margin-top: auto; padding: 1px 0 1px 3px; gap: 5px; background: #ececec; }
.thumb { flex: 226 1 0; height: 9px; border: 1px solid #a8a8a8; border-radius: 1px; background: repeating-linear-gradient(90deg, #777 0 1px, transparent 1px 2px) center / 5px 4px no-repeat, linear-gradient(#f4f4f4, #cfcfcf); }
.rest { flex: 270 1 0; }
.tri { border: 2px solid transparent; }
.tri.l { border-right: 3px solid #444; border-left: 0; }
.tri.r { border-left: 3px solid #444; border-right: 0; }
.corner { width: 9px; height: 8px; border: 1px solid #999; box-shadow: inset 0 0 0 1px #fff, inset 0 0 0 2px #aaa; }

.status { display: flex; flex: none; align-items: center; justify-content: flex-end; gap: 3px; height: 14px; padding-right: 1px; background: #f0f0f0; }
.status span { padding: 0 4px; border-left: 1px solid #aaa; border-right: 1px solid #aaa; line-height: 12px; }
.resize { align-self: flex-end; width: 8px; height: 8px; background: radial-gradient(#999 1px, transparent 1px) 0 0 / 3px 3px; clip-path: polygon(100% 0, 100% 100%, 0 100%); }
```
